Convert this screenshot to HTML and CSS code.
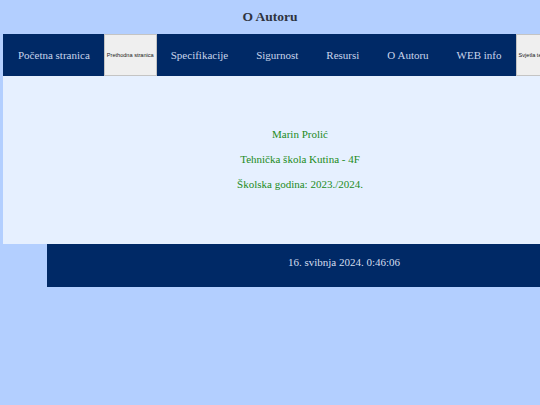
FILE: index.html
```html
<!DOCTYPE html>
<html lang="hr">
<head>
<meta charset="utf-8">
<title>O Autoru</title>
<link rel="stylesheet" href="styles.css">
</head>
<body>
<header class="top">
  <h1 class="title">O Autoru</h1>
</header>
<div class="page">
  <nav class="nav">
    <a class="nav-link" href="#">Početna stranica</a>
    <button class="nav-btn" type="button">Prethodna stranica</button>
    <a class="nav-link" href="#">Specifikacije</a>
    <a class="nav-link" href="#">Sigurnost</a>
    <a class="nav-link" href="#">Resursi</a>
    <a class="nav-link" href="#">O Autoru</a>
    <a class="nav-link" href="#">WEB info</a>
    <button class="nav-btn" type="button">Svjetla tema</button>
  </nav>
  <main class="content">
    <p class="line">Marin Prolić</p>
    <p class="line">Tehnička škola Kutina - 4F</p>
    <p class="line">Školska godina: 2023./2024.</p>
  </main>
</div>
<footer class="footer">
  <p class="clock">16. svibnja 2024. 0:46:06</p>
</footer>
</body>
</html>
```

FILE: styles.css
```css
html, body {
  margin: 0;
  padding: 0;
  overflow: hidden;
}
body {
  background: #b3cfff;
  font-family: "Liberation Serif", "Times New Roman", serif;
  width: 540px;
  height: 405px;
}
.top {
  height: 34px;
  display: flex;
  align-items: center;
  justify-content: center;
}
.title {
  margin: 0;
  font-size: 13.5px;
  font-weight: bold;
  color: #2f3440;
  line-height: 1;
}
.page {
  margin-left: 3px;
  width: 594px;
}
.nav {
  display: flex;
  height: 42px;
  background: #002966;
  align-items: stretch;
}
.nav-link {
  display: flex;
  align-items: center;
  padding: 0 14px;
  font-size: 11px;
  color: #c9d5ec;
  text-decoration: none;
  white-space: nowrap;
}
.nav-link:first-child {
  padding-left: 15px;
}
.nav-btn {
  flex: none;
  margin: 0;
  padding: 0 2px;
  background: #efefef;
  border: 1px solid #c4c4c4;
  font-family: "Liberation Sans", Arial, sans-serif;
  font-size: 5.6px;
  color: #202020;
  white-space: nowrap;
}
.content {
  box-sizing: border-box;
  height: 168px;
  padding-top: 52px;
  background: #e6f0ff;
  display: flex;
  flex-direction: column;
  align-items: center;
  gap: 12px;
}
.line {
  margin: 0;
  font-size: 11px;
  line-height: 13px;
  color: #228b22;
}
.footer {
  box-sizing: border-box;
  margin-left: 47px;
  width: 594px;
  height: 43px;
  padding-top: 11.5px;
  background: #002966;
}
.clock {
  margin: 0;
  text-align: center;
  font-size: 11px;
  line-height: 13px;
  color: #d5deee;
}
```
